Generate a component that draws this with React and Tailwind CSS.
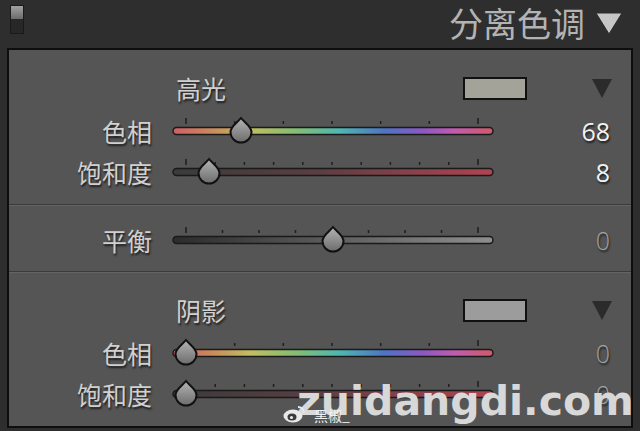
import React from 'react';

const CJK = { fontFamily: '"Noto Sans CJK SC", "Noto Sans", sans-serif' };

const hueStops = [
  ['0%', '#cf5f68'],
  ['12%', '#c98a5c'],
  ['24%', '#c2bd62'],
  ['38%', '#86bd72'],
  ['52%', '#4fb7b1'],
  ['66%', '#4f74c4'],
  ['78%', '#8c58c2'],
  ['88%', '#c05cae'],
  ['100%', '#cf5a68'],
];

const satStops = [
  ['0%', '#3b3b3b'],
  ['45%', '#5a3e42'],
  ['100%', '#b04451'],
];

const Slider = ({ id, stops, ticks, major, thumb }) => {
  const cy = 17;
  return (
    <svg width="326" height="34" viewBox="0 0 326 34" className="block shrink-0">
      <defs>
        <linearGradient id={id} x1="0" x2="1" y1="0" y2="0">
          {stops.map(([o, c]) => (
            <stop key={o} offset={o} stopColor={c} />
          ))}
        </linearGradient>
        <linearGradient id={id + '-t'} x1="0" x2="0" y1="0" y2="1">
          <stop offset="0%" stopColor="#b4b4b4" />
          <stop offset="100%" stopColor="#6c6c6c" />
        </linearGradient>
      </defs>
      {ticks.map((x, i) => (
        <line
          key={i}
          x1={x}
          x2={x}
          y1={major.includes(i) ? cy - 13 : cy - 10}
          y2={cy - 7}
          stroke="#1e1e1e"
          strokeWidth="1.5"
        />
      ))}
      <rect x="3" y={cy - 3.5} width="320" height="7" rx="3.5" fill={`url(#${id})`} stroke="#1a1a1a" strokeWidth="1.5" />
      <path
        transform={`translate(${thumb} ${cy + 1})`}
        d="M0,-14 C4,-9 10.5,-5.5 10.5,0 A10.5 10.5 0 0 1 -10.5 0 C-10.5,-5.5 -4,-9 0,-14 Z"
        fill={`url(#${id}-t)`}
        stroke="#111"
        strokeWidth="2"
      />
    </svg>
  );
};

const spread = (n) => Array.from({ length: n }, (_, i) => 16 + (292 * i) / (n - 1));

const Row = ({ label, value, bright, slider, h }) => (
  <div className={`flex items-center ${h}`}>
    <div
      className="w-[143px] text-right text-[25px] leading-none text-[#d0d0d0] [text-shadow:1px_2px_2px_#1d1d1d]"
      style={CJK}
    >
      {label}
    </div>
    <div className="ml-[18px]">{slider}</div>
    <div
      className={`flex-1 pr-[21px] text-right text-[25px] leading-none [text-shadow:1px_2px_2px_#1d1d1d] ${
        bright ? 'text-[#f2f2f2]' : 'text-[#a0a0a0] font-light'
      }`}
      style={{ fontFamily: '"Open Sans", "DejaVu Sans", sans-serif' }}
    >
      {value}
    </div>
  </div>
);

const Header = ({ title, swatch }) => (
  <div className="flex h-[38px] items-center pl-[167px] pr-[19px]">
    <span className="text-[25px] leading-none text-[#d0d0d0] [text-shadow:1px_2px_2px_#1d1d1d]" style={CJK}>
      {title}
    </span>
    <div className={`ml-auto h-[23px] w-[64px] border-2 border-[#111] ${swatch}`} />
    <svg width="20" height="20" viewBox="0 0 20 20" className="ml-[65px]">
      <polygon points="0,1 20,1 10,20" fill="#2b2b2b" />
    </svg>
  </div>
);

const Divider = () => (
  <div>
    <div className="h-px bg-[#3b3b3b]" />
    <div className="h-px bg-[#646464]" />
  </div>
);

const App = () => {
  return (
    <div className="relative h-[431px] w-[640px] overflow-hidden bg-[#2e2e2e]">
      <header className="flex h-[48px] items-start">
        <div className="ml-[10px] mt-[5px] flex h-[29px] w-[14px] flex-col border border-[#1a1a1a]">
          <div className="h-[13px] bg-gradient-to-b from-[#a3a3a3] to-[#6b6b6b]" />
          <div className="flex-1 bg-[#272727]" />
        </div>
        <div className="ml-auto mt-[3px] text-[34px] leading-[40px] text-[#b3b3b3]" style={CJK}>
          分离色调
        </div>
        <svg width="28" height="23" viewBox="0 0 28 23" className="ml-[10px] mr-[17px] mt-[12px]">
          <polygon points="1,1 27,1 14,22" fill="#c6c6c6" stroke="#2a2a2a" strokeWidth="1" />
        </svg>
      </header>

      <div className="mx-[7px] border-2 border-[#0e0e0e] bg-[#555555]">
        <section className="pb-[15px] pt-[19px]">
          <Header title="高光" swatch="bg-[#a3a39a]" />
          <Row
            label="色相"
            value="68"
            bright
            h="h-[48px]"
            slider={<Slider id="h1" stops={hueStops} ticks={spread(7)} major={[0, 6]} thumb={71} />}
          />
          <Row
            label="饱和度"
            value="8"
            bright
            h="h-[34px]"
            slider={<Slider id="s1" stops={satStops} ticks={spread(11)} major={[0, 10]} thumb={39} />}
          />
        </section>
        <Divider />
        <section className="pb-[14px] pt-[17px]">
          <Row
            label="平衡"
            value="0"
            h="h-[34px]"
            slider={
              <Slider
                id="b1"
                stops={[
                  ['0%', '#2c2c2c'],
                  ['100%', '#8e8e8e'],
                ]}
                ticks={spread(9)}
                major={[0, 8]}
                thumb={163}
              />
            }
          />
        </section>
        <Divider />
        <section className="pb-[15px] pt-[18px]">
          <Header title="阴影" swatch="bg-[#9c9c9c]" />
          <Row
            label="色相"
            value="0"
            h="h-[48px]"
            slider={<Slider id="h2" stops={hueStops} ticks={spread(7)} major={[0, 6]} thumb={16} />}
          />
          <Row
            label="饱和度"
            value="0"
            h="h-[34px]"
            slider={<Slider id="s2" stops={satStops} ticks={spread(11)} major={[0, 10]} thumb={16} />}
          />
        </section>
      </div>

      {/* watermark */}
      <div
        className="absolute left-[297px] top-[381px] text-[41px] font-bold leading-none text-[#d8d8d8]"
        style={{ fontFamily: '"DejaVu Sans", sans-serif' }}
      >
        zuidangdi.com
      </div>
      <svg width="22" height="18" viewBox="0 0 22 18" className="absolute left-[283px] top-[405px]">
        <ellipse cx="10" cy="11" rx="9.5" ry="6.5" fill="#e8e8e8" />
        <ellipse cx="9" cy="12" rx="4.5" ry="3.5" fill="#3a3a3a" />
        <circle cx="8.5" cy="12.5" r="1.6" fill="#e8e8e8" />
        <path d="M15 2 a6 6 0 0 1 6 6" stroke="#e8e8e8" strokeWidth="1.8" fill="none" />
      </svg>
      <div className="absolute left-[314px] top-[408px] text-[14px] leading-none text-[#f0f0f0]" style={CJK}>
        黑椒_
      </div>
    </div>
  );
};

export default App;
